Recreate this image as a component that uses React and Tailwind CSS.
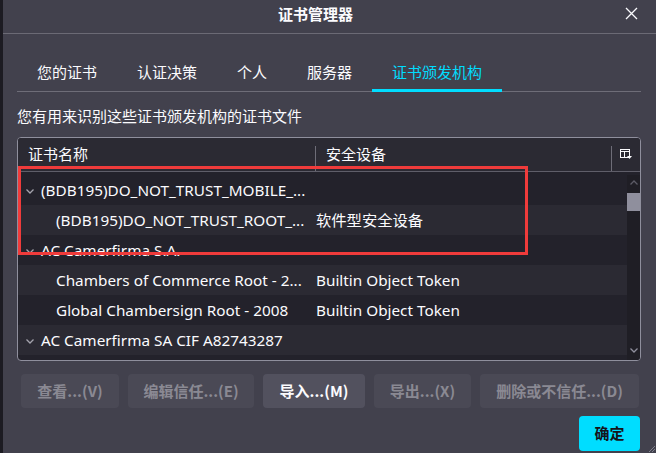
import { Fragment } from 'react'

const tabs = ['您的证书', '认证决策', '个人', '服务器', '证书颁发机构']

const rows = [
  { name: '(BDB195)DO_NOT_TRUST_MOBILE_...', device: '', parent: true },
  { name: '(BDB195)DO_NOT_TRUST_ROOT_...', device: '软件型安全设备' },
  { name: 'AC Camerfirma S.A.', device: '', parent: true },
  { name: 'Chambers of Commerce Root - 2...', device: 'Builtin Object Token' },
  { name: 'Global Chambersign Root - 2008', device: 'Builtin Object Token' },
  { name: 'AC Camerfirma SA CIF A82743287', device: '', parent: true },
]

const buttons = [
  { label: '查看...(V)', w: 'w-[98px]' },
  { label: '编辑信任...(E)', w: 'w-[126px]' },
  { label: '导入...(M)', w: 'w-[102px]', enabled: true },
  { label: '导出...(X)', w: 'w-[97px]' },
  { label: '删除或不信任...(D)', w: 'w-[159px]' },
]

const cjk = { fontFamily: '"Noto Sans CJK SC", sans-serif' }
const mixed = { fontFamily: '"Noto Sans", "Noto Sans CJK SC", sans-serif' }

function Chevron({ up, className }) {
  return (
    <svg width="8" height="5" viewBox="0 0 8 5" className={className}>
      <path d={up ? 'M0.5 4.5 L4 1 L7.5 4.5' : 'M0.5 0.5 L4 4 L7.5 0.5'} fill="none" stroke="currentColor" strokeWidth="1.3" />
    </svg>
  )
}

export default function App() {
  return (
    <div className="relative flex h-[453px] w-[656px] overflow-hidden bg-[#1c1b22]" style={cjk}>
      <div className="w-[3px] shrink-0 bg-[#1c1b22]" />
      <div className="relative flex flex-1 flex-col bg-[#42414d] text-[15px] text-[#fbfbfe]">
        {/* title bar */}
        <div className="relative flex h-[34px] items-center justify-center border-b border-[#6b6a75] pb-[5px] pr-[28px]">
          <span className="font-bold">证书管理器</span>
          <svg width="13" height="13" viewBox="0 0 13 13" className="absolute right-[18px] top-[7px]">
            <path d="M1 1 L12 12 M12 1 L1 12" stroke="#fbfbfe" strokeWidth="1.3" />
          </svg>
        </div>

        <div className="flex flex-col pl-[14px] pr-[15px]">
          {/* tabs */}
          <div className="mt-[19px] flex h-[39px] border-b border-[#6e6d78]">
            {tabs.map((t, i) => (
              <div key={t} className={`relative flex items-center px-5 ${i === 4 ? 'text-[#00ddff]' : ''}`}>
                {t}
                {i === 4 && <span className="absolute inset-x-0 -bottom-px h-[3px] bg-[#00ddff]" />}
              </div>
            ))}
          </div>

          <p className="mt-[14px] leading-[20px]">您有用来识别这些证书颁发机构的证书文件</p>

          {/* tree */}
          <div className="mt-[11px] flex h-[224px] flex-col overflow-hidden rounded-[4px] border border-[#8f8f9d] bg-[#23222b]">
            <div className="flex h-[34px] shrink-0 border-b border-[#5f5e69] bg-[#2b2a33]">
              <div className="flex w-[297px] items-center pl-[10px]">证书名称</div>
              <div className="mt-[8px] w-px bg-[#6e6d78]" />
              <div className="flex w-[295px] items-center pl-[10px]">安全设备</div>
              <div className="mt-[8px] w-px bg-[#6e6d78]" />
              <div className="flex flex-1 items-center justify-center">
                <svg width="12" height="11" viewBox="0 0 12 11">
                  <rect x="0.5" y="0.5" width="9" height="8" fill="none" stroke="#fbfbfe" />
                  <path d="M0.5 2.5 H9.5 M4.5 2.5 V8.5" stroke="#fbfbfe" />
                  <path d="M7 7 H12 L9.5 10 Z" fill="#fbfbfe" />
                </svg>
              </div>
            </div>
            <div className="flex flex-1 pt-[3px]">
              <div className="flex flex-1 flex-col text-[15.3px]" style={mixed}>
                {rows.map((r, i) => (
                  <div key={i} className={`flex h-[30px] shrink-0 items-center ${i % 2 ? 'bg-[#2b2a33]' : 'bg-[#23222b]'}`}>
                    <div className={`flex w-[298px] items-center whitespace-nowrap ${r.parent ? 'pl-[8px]' : 'pl-[38px]'}`}>
                      {r.parent && <Chevron className="mr-[7px] mt-[2px] text-[#a4a3ad]" />}
                      {r.name}
                    </div>
                    <div className="whitespace-nowrap">{r.device}</div>
                  </div>
                ))}
              </div>
              <div className="flex w-[13px] flex-col items-center bg-[#1f1e25]">
                <Chevron up className="mt-[5px] text-[#5c5b66]" />
                <div className="mt-[8px] h-[18px] w-full bg-[#8f8f9d]" />
                <div className="flex-1" />
                <Chevron className="mb-[7px] text-[#8f8f9d]" />
              </div>
            </div>
          </div>

          {/* buttons */}
          <div className="ml-[4px] mt-[13px] flex gap-[9px]">
            {buttons.map(b => (
              <div
                key={b.label}
                className={`flex h-[34px] items-center justify-center rounded-[4px] font-bold ${b.w} ${b.enabled ? 'bg-[#52515e] text-[#fbfbfe]' : 'bg-[#4a4955] text-[#8a8993]'}`}
              >
                {b.label}
              </div>
            ))}
          </div>

          <div className="mt-[8px] flex justify-end pr-[1px]">
            <div className="flex h-[35px] w-[61px] items-center justify-center rounded-[4px] bg-[#00ddff] font-bold text-[#15141a]">
              确定
            </div>
          </div>
        </div>

        <svg width="6" height="6" viewBox="0 0 6 6" className="absolute bottom-[1px] right-[1px]">
          <path d="M6 0 L0 6 M6 3 L3 6" stroke="#8f8f9d" strokeWidth="0.8" />
        </svg>
      </div>

      {/* annotation */}
      <div className="absolute left-[18px] top-[166px] h-[89px] w-[510px] border-[3px] border-[#ef3b3b]" />
    </div>
  )
}
